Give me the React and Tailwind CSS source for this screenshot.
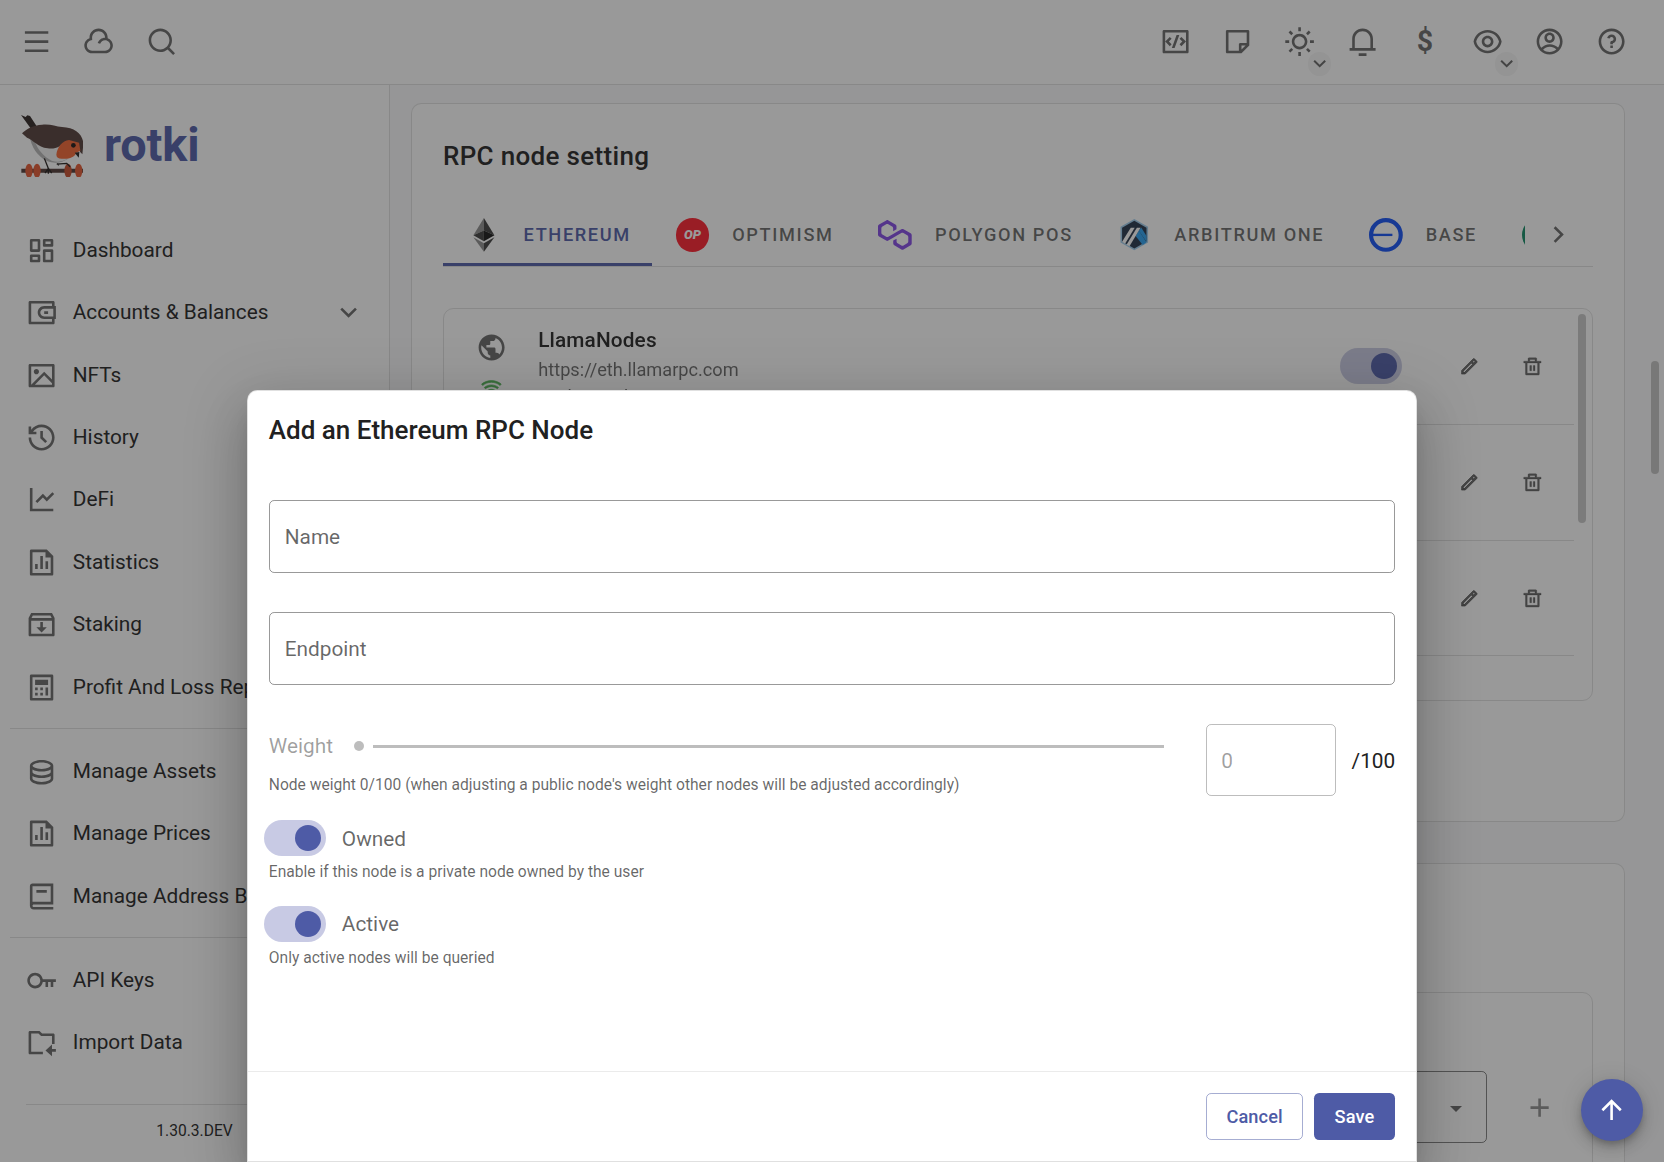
import React from "react";
import {
  RiMenuLine, RiCloudLine, RiSearchLine, RiCodeBoxLine, RiStickyNoteLine, RiSunLine,
  RiNotification3Line, RiEyeLine, RiAccountCircleLine, RiQuestionLine, RiArrowDownSLine,
  RiArrowRightSLine, RiDashboardLine, RiWallet3Line, RiImageLine, RiHistoryLine,
  RiLineChartLine, RiFileChartLine, RiInboxArchiveLine, RiCalculatorLine, RiDatabase2Line,
  RiBook2Line, RiKeyLine, RiFolderReceivedLine, RiPencilLine, RiDeleteBinLine,
  RiWifiLine, RiArrowUpLine, RiAddLine,
} from "react-icons/ri";
import { MdPublic } from "react-icons/md";

function HeaderButton({ icon: Icon, badge, children }) {
  return (
    <div className="relative flex h-12 w-12 items-center justify-center text-black/60">
      {Icon ? <Icon size={24} /> : children}
      {badge && (
        <span className="absolute top-[32px] left-[30px] flex h-[18px] w-[18px] items-center justify-center rounded-full bg-[#f5f5f5]">
          <RiArrowDownSLine size={18} />
        </span>
      )}
    </div>
  );
}

function Header() {
  return (
    <header className="flex h-[65px] shrink-0 items-center justify-between border-b border-black/12 bg-white pr-4 pl-1">
      <div className="flex">
        <HeaderButton icon={RiMenuLine} />
        <HeaderButton icon={RiCloudLine} />
        <HeaderButton icon={RiSearchLine} />
      </div>
      <div className="flex">
        <HeaderButton icon={RiCodeBoxLine} />
        <HeaderButton icon={RiStickyNoteLine} />
        <HeaderButton icon={RiSunLine} badge />
        <HeaderButton icon={RiNotification3Line} />
        <HeaderButton>
          <span className="text-[22px] leading-none font-bold">$</span>
        </HeaderButton>
        <HeaderButton icon={RiEyeLine} badge />
        <HeaderButton icon={RiAccountCircleLine} />
        <HeaderButton icon={RiQuestionLine} />
      </div>
    </header>
  );
}

function Bird() {
  return (
    <svg viewBox="62 343 187 187" className="h-12 w-12">
      <path d="M62 343l14 6 5-5 8 2 22 34-18 6z" fill="#2c2220" />
      <path d="M88 405c4 34 24 62 52 76 20 8 44 6 62-6l10-60-90-14z" fill="#b5b5b5" />
      <path d="M102 418c10 30 28 50 52 62 20 6 40 2 54-10l-8-40z" fill="#f1f1f1" />
      <path d="M65 398c14-14 34-24 60-26 24-3 40 5 60 7 40 2 62 22 64 50l-3 32-6-6-14-30-30-4c-10 14-30 26-54 22-30-4-44-26-62-32z" fill="#513a36" />
      <path d="M168 462c2-22 18-42 38-44l30 8 4 24-12 6c-6 14-22 20-44 18-10 0-16-4-16-12z" fill="#f4622f" />
      <circle cx="219" cy="434" r="7" fill="#181412" />
      <path d="M223 456l14-2-2 17z" fill="#1c1a19" />
      <path d="M63 504h185v12H63z" fill="#4c3632" />
      <ellipse cx="86" cy="510" rx="11" ry="21" fill="#e4562f" />
      <ellipse cx="110" cy="510" rx="11" ry="21" fill="#e4562f" />
      <ellipse cx="203" cy="510" rx="11" ry="21" fill="#c64a2a" />
      <ellipse cx="235" cy="510" rx="11" ry="21" fill="#e4562f" />
      <path d="M132 473l12 30m0 0l-10 14m10-14v16m0-16l10 14M169 490l30-2 10 10m-38-10l4 6" fill="none" stroke="#1f1a18" strokeWidth="4" />
    </svg>
  );
}

function NavItem({ icon: Icon, label, expandable }) {
  return (
    <div className="flex h-12 items-center pr-[19px] pl-5">
      <Icon size={24} className="shrink-0 text-black/60" />
      <span className="ml-3 flex-1 text-base whitespace-nowrap">{label}</span>
      {expandable && <RiArrowDownSLine size={24} className="text-black/60" />}
    </div>
  );
}

function Sidebar() {
  return (
    <aside className="flex w-[300px] shrink-0 flex-col border-r border-black/12 bg-white">
      <div className="flex h-[95.5px] items-center pb-px pl-4">
        <Bird />
        <span className="-mt-px ml-4 text-4xl font-bold tracking-[-0.1px] text-[#4e5ba6]">rotki</span>
      </div>
      <nav className="mt-[8.2px]">
        <NavItem icon={RiDashboardLine} label="Dashboard" />
        <NavItem icon={RiWallet3Line} label="Accounts & Balances" expandable />
        <NavItem icon={RiImageLine} label="NFTs" />
        <NavItem icon={RiHistoryLine} label="History" />
        <NavItem icon={RiLineChartLine} label="DeFi" />
        <NavItem icon={RiFileChartLine} label="Statistics" />
        <NavItem icon={RiInboxArchiveLine} label="Staking" />
        <NavItem icon={RiCalculatorLine} label="Profit And Loss Report" />
        <div className="mx-2 mt-[7.2px] mb-[9px] border-t border-black/12" />
        <NavItem icon={RiDatabase2Line} label="Manage Assets" />
        <NavItem icon={RiFileChartLine} label="Manage Prices" />
        <NavItem icon={RiBook2Line} label="Manage Address Book" />
        <div className="mx-2 mt-[7px] mb-[9px] border-t border-black/12" />
        <NavItem icon={RiKeyLine} label="API Keys" />
        <NavItem icon={RiFolderReceivedLine} label="Import Data" />
      </nav>
      <div className="mx-5 mt-auto flex h-[44.5px] justify-center border-t border-black/12 pt-[12.5px] text-xs">
        1.30.3.DEV
      </div>
    </aside>
  );
}

function EthereumLogo() {
  return (
    <svg viewBox="0 0 26 26" className="h-[26px] w-[26px]">
      <path d="M13 0v9.6L4.9 13.3z" fill="#8c8c8c" />
      <path d="M13 0v9.6l8.1 3.7z" fill="#3c3c3b" />
      <path d="M13 9.6v8.3l-8.1-4.6z" fill="#3c3c3b" />
      <path d="M13 9.6v8.3l8.1-4.6z" fill="#141414" />
      <path d="M4.9 14.9l8.1 4.6V26z" fill="#8c8c8c" />
      <path d="M21.1 14.9L13 19.5V26z" fill="#3c3c3b" />
    </svg>
  );
}

function OptimismLogo() {
  return (
    <div className="flex h-[26px] w-[26px] items-center justify-center rounded-full bg-[#ff1a2a] text-[10px] leading-none font-black text-white italic">
      OP
    </div>
  );
}

function PolygonLogo() {
  return (
    <svg viewBox="0 0 38.4 33.5" className="h-[23px] w-[26px]" fill="#8247e5">
      <path d="M29,10.2c-0.7-0.4-1.6-0.4-2.4,0L21,13.5l-3.8,2.1l-5.5,3.3c-0.7,0.4-1.6,0.4-2.4,0L5,16.3c-0.7-0.4-1.2-1.2-1.2-2.1v-5c0-0.8,0.4-1.6,1.2-2.1l4.3-2.5c0.7-0.4,1.6-0.4,2.4,0L16,7.2c0.7,0.4,1.2,1.2,1.2,2.1v3.3l3.8-2.2V7c0-0.8-0.4-1.6-1.2-2.1l-8-4.7c-0.7-0.4-1.6-0.4-2.4,0L1.2,5C0.4,5.4,0,6.2,0,7v9.4c0,0.8,0.4,1.6,1.2,2.1l8.1,4.7c0.7,0.4,1.6,0.4,2.4,0l5.5-3.2l3.8-2.2l5.5-3.2c0.7-0.4,1.6-0.4,2.4,0l4.3,2.5c0.7,0.4,1.2,1.2,1.2,2.1v5c0,0.8-0.4,1.6-1.2,2.1L29,28.8c-0.7,0.4-1.6,0.4-2.4,0l-4.3-2.5c-0.7-0.4-1.2-1.2-1.2-2.1V21l-3.8,2.2v3.3c0,0.8,0.4,1.6,1.2,2.1l8.1,4.7c0.7,0.4,1.6,0.4,2.4,0l8.1-4.7c0.7-0.4,1.2-1.2,1.2-2.1V17c0-0.8-0.4-1.6-1.2-2.1L29,10.2z" />
    </svg>
  );
}

function ArbitrumLogo() {
  return (
    <svg viewBox="0 0 22 24" className="h-6 w-[22px]">
      <path d="M11 0l10.6 6v12L11 24 .4 18V6z" fill="#9dcced" />
      <path d="M11 1.3l9.4 5.4v10.6L11 22.7l-9.4-5.4V6.7z" fill="#213147" />
      <path d="M12 13l2.5-4.2 5.9 9L17.5 20z" fill="#28a0f0" />
      <path d="M14.5 9l1.8-2.5 4.1 6.5v4.5z" fill="#28a0f0" />
      <path d="M1.6 17.6L8.3 6.7h3L3.9 19z" fill="#fff" />
      <path d="M5 19.8l8-13h2.8L7.3 21z" fill="#fff" />
    </svg>
  );
}

function BaseLogo() {
  return (
    <svg viewBox="0 0 26 26" className="h-[26px] w-[26px]" fill="none" stroke="#0f4ef5">
      <circle cx="13" cy="13" r="11.4" strokeWidth="3.2" />
      <path d="M2 13h16" strokeWidth="1.8" />
    </svg>
  );
}

function Tab({ logo, label, active }) {
  return (
    <div
      className={
        active
          ? "flex h-12 shrink-0 items-center border-b-[2.4px] border-[#4e5ba6] px-4 pt-0.5 text-[#4e5ba6]"
          : "flex h-12 shrink-0 items-center px-4 text-black/60"
      }
    >
      <span className="mr-[15px] flex w-[31px] justify-center">{logo}</span>
      <span className="text-sm font-medium tracking-[1.25px] whitespace-nowrap">{label}</span>
    </div>
  );
}

function Toggle() {
  return (
    <span className="flex h-7 w-12 shrink-0 items-center justify-end rounded-full bg-[#c8cae4] pr-1">
      <span className="h-5 w-5 rounded-full bg-[#4e5ba6]" />
    </span>
  );
}

function NodeRow({ name, url, weight }) {
  return (
    <div className="flex h-[89px] items-center border-b border-black/12">
      <div className="flex h-full w-[72.5px] shrink-0 flex-col items-center pt-[17px]">
        <MdPublic size={24} className="text-black/60" />
        <RiWifiLine size={16} strokeWidth={0.8} className="mt-3 text-[#4caf50]" />
      </div>
      <div className="flex h-full flex-1 flex-col pt-3">
        <span className="text-base leading-6 font-medium tracking-[0.1px]">{name}</span>
        <span className="text-sm leading-[21px] text-black/60">{url}</span>
        <span className="text-sm leading-5 text-black/60">{weight}</span>
      </div>
      <div className="pb-[1.5px]">
        <Toggle />
      </div>
      <RiPencilLine size={16} className="ml-[44px] stroke-[0.8] text-black/60" />
      <RiDeleteBinLine size={16} className="mr-[24px] ml-8 stroke-[0.4] text-black/60" />
    </div>
  );
}

function Content() {
  return (
    <main className="flex min-w-0 flex-1 justify-between bg-[#f9fafb]">
      <div className="ml-4 flex w-[934px] shrink-0 flex-col pt-[14px]">
        <section className="h-[553px] shrink-0 rounded-lg border border-black/12 bg-white px-6">
          <h2 className="mt-[25px] text-xl leading-8 font-medium tracking-[0.25px]">RPC node setting</h2>
          <div className="mt-5 flex h-[49px] border-b border-black/12">
            <div className="flex w-[832px] shrink-0 overflow-hidden">
              <Tab active logo={<EthereumLogo />} label="ETHEREUM" />
              <Tab logo={<OptimismLogo />} label="OPTIMISM" />
              <Tab logo={<PolygonLogo />} label="POLYGON POS" />
              <Tab logo={<ArbitrumLogo />} label="ARBITRUM ONE" />
              <Tab logo={<BaseLogo />} label="BASE" />
              <Tab logo={<span className="h-[26px] w-[26px] rounded-full bg-[#0e8a63]" />} />
            </div>
            <div className="flex h-12 flex-1 items-center justify-center text-black/60">
              <RiArrowRightSLine size={24} />
            </div>
          </div>
          <div className="mt-[31.5px] flex h-[302px] justify-between rounded-lg border border-black/12">
            <div className="w-[869px] blur-[0.4px]">
              <NodeRow name="LlamaNodes" url="https://eth.llamarpc.com" weight="Node weight: 20%" />
              <NodeRow name="Flashbots" url="https://rpc.flashbots.net" weight="Node weight: 20%" />
              <NodeRow name="Ankr" url="https://rpc.ankr.com/eth" weight="Node weight: 20%" />
            </div>
            <div className="mt-[3.5px] mr-[4.5px] h-[161px] w-1.5 rounded-full bg-[#c8c8c8]" />
          </div>
        </section>
        <section className="mt-8 h-[300px] shrink-0 rounded-lg border border-black/12 bg-white px-6 pt-[98px]">
          <div className="flex h-[200px] rounded-lg border border-black/12 pt-[60px] pl-6">
            <div className="flex h-14 w-[778px] items-center justify-end rounded border border-black/50 pt-[3px] pr-[18px]">
              <span className="h-0 w-0 border-x-[5px] border-t-[5px] border-x-transparent border-t-black/60" />
            </div>
            <RiAddLine size={24} className="mt-[16.5px] ml-[28.5px] text-black/45" />
          </div>
        </section>
      </div>
      <div className="mt-[213px] mr-1 h-[87px] w-1.5 rounded-full bg-[#c3c3c3]" />
    </main>
  );
}

function TextField({ label }) {
  return (
    <div className="flex h-14 items-center rounded border border-black/40 pt-0.5 pl-[11.5px] text-base text-black/60">
      {label}
    </div>
  );
}

function SwitchField({ label, hint }) {
  return (
    <div>
      <div className="-ml-1 flex items-center">
        <Toggle />
        <span className="ml-[12.2px] pt-[1.5px] text-base text-black/60">{label}</span>
      </div>
      <p className="mt-[3.8px] text-xs leading-[18px] text-black/60">{hint}</p>
    </div>
  );
}

function Dialog() {
  return (
    <div className="flex h-[594px] w-[900px] flex-col rounded-t-lg border border-black/12 bg-white shadow-[0_11px_15px_-7px_rgba(0,0,0,0.2),0_24px_38px_3px_rgba(0,0,0,0.14),0_9px_46px_8px_rgba(0,0,0,0.12)]">
      <div className="px-4 pt-[15px]">
        <h3 className="text-xl leading-8 font-medium">Add an Ethereum RPC Node</h3>
      </div>
      <div className="mt-[37px] flex flex-col px-4">
        <TextField label="Name" />
        <div className="mt-[30px]">
          <TextField label="Endpoint" />
        </div>
        <div className="mt-[30px] flex h-14 items-center">
          <div className="flex h-14 flex-1 flex-col">
            <div className="mt-[6px] flex h-6 items-center text-base text-black/38">
              Weight
              <span className="mb-px ml-4 h-2 w-2 rounded-full bg-[#bdbdbd]" />
              <span className="mr-8 mb-px ml-[6.5px] h-[2.4px] flex-1 bg-[#bdbdbd]" />
            </div>
            <p className="mt-[9px] text-xs leading-[18px] text-black/60">
              Node weight 0/100 (when adjusting a public node's weight other nodes will be adjusted accordingly)
            </p>
          </div>
          <div className="flex h-14 w-[100px] items-center rounded border border-black/26 pt-0.5 pl-[11px] text-base text-black/38">
            0
          </div>
          <span className="ml-3 pt-0.5 text-base">/100</span>
        </div>
        <div className="mt-[18.2px] flex flex-col gap-[16.2px]">
          <SwitchField label="Owned" hint="Enable if this node is a private node owned by the user" />
          <SwitchField label="Active" hint="Only active nodes will be queried" />
        </div>
      </div>
      <div className="mt-auto flex h-[69px] items-start justify-end gap-2 border-t border-black/8 px-4 pt-4">
        <button className="h-9 rounded border border-[#4e5ba6]/50 px-[15px] pt-px text-sm font-medium tracking-[0.1px] text-[#4e5ba6]">Cancel</button>
        <button className="h-9 rounded bg-[#4e5ba6] px-4 pt-px text-sm font-medium tracking-[0.1px] text-white">Save</button>
      </div>
    </div>
  );
}

export default function App() {
  return (
    <div className="relative h-[893.8px] w-[1280px] overflow-hidden font-['Roboto',sans-serif] text-[#212121] antialiased [zoom:1.3]">
      <div className="flex h-full flex-col">
        <Header />
        <div className="flex min-h-0 flex-1">
          <Sidebar />
          <Content />
        </div>
      </div>
      <div className="absolute inset-0 flex items-end justify-center bg-[#212121]/46">
        <Dialog />
      </div>
      <div className="absolute right-4 bottom-4 flex h-12 w-12 items-center justify-center rounded-full bg-[#4e5ba6] text-white shadow-[0_3px_5px_-1px_rgba(0,0,0,0.2),0_6px_10px_0_rgba(0,0,0,0.14),0_1px_18px_0_rgba(0,0,0,0.12)]">
        <RiArrowUpLine size={24} />
      </div>
    </div>
  );
}
